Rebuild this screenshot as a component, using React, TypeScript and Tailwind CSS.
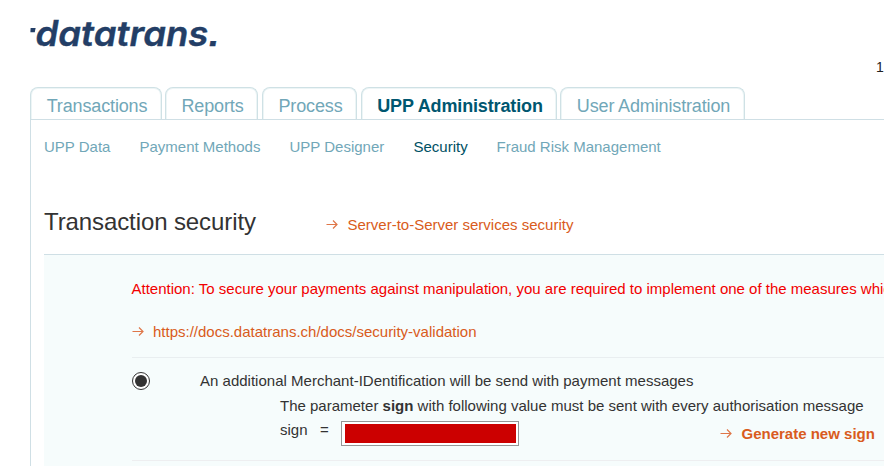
import clsx from "clsx";
import type { ReactNode } from "react";

const tabs = [
	{ label: "Transactions", box: "w-[132px] mr-[3px]" },
	{ label: "Reports", box: "w-[93px] mr-1" },
	{ label: "Process", box: "w-[95px] mr-1" },
	{ label: "UPP Administration", box: "w-[196px] mr-[3px]", active: true },
	{ label: "User Administration", box: "w-[185px]" },
];

const subTabs = [
	{ label: "UPP Data", box: "w-[95.5px]" },
	{ label: "Payment Methods", box: "w-[150px]" },
	{ label: "UPP Designer", box: "w-[124px]" },
	{ label: "Security", box: "w-[83px]", active: true },
	{ label: "Fraud Risk Management", box: "w-[180px]" },
];

function Logo() {
	return (
		<svg width="200" height="44" viewBox="0 0 200 44" className="block">
			<path d="M0.6 10h5l-.8 4.300h-4.400z" fill="#233e66" />
			<text
				x="5.500"
				y="28"
				textLength="184.500"
				lengthAdjust="spacingAndGlyphs"
				fill="#233e66"
				className="font-['Inter',sans-serif] text-[35px] font-semibold italic [font-feature-settings:'cv11','ss07']"
				stroke="#233e66"
				strokeWidth="0.4"
			>
				datatrans.
			</text>
		</svg>
	);
}

function ArrowLink({
	children,
	className,
}: {
	children: ReactNode;
	className?: string;
}) {
	return (
		<a className={clsx("flex items-center text-[#d95b20]", className)}>
			<svg
				width="12"
				height="12"
				viewBox="0 0 12 12"
				fill="none"
				stroke="#df7648"
				strokeWidth="1.2"
				className="mr-[9.500px] shrink-0"
			>
				<path d="M0.500 5.500h10.500M7 1.500l4 4-4 4" />
			</svg>
			{children}
		</a>
	);
}

export default function App() {
	return (
		<main className="h-[466px] w-[884px] overflow-hidden bg-white pl-[30px] font-['Liberation_Sans',Arial,sans-serif] text-[15px] leading-5 whitespace-nowrap text-[#333]">
			<header className="flex h-[87px] justify-between pt-[18px]">
				<Logo />
				<span className="w-2 pt-[39px] text-[14px] text-[#222]">1</span>
			</header>

			<nav className="flex h-8 text-[18px] tracking-[-0.14px]">
				{tabs.map((tab) => (
					<a
						key={tab.label}
						className={clsx(
							"flex justify-center rounded-t-[8px] border border-b-0 border-[#cfe1e5] pt-[8px] pl-[2px] shadow-[inset_0_1px_0_#edf5f6,inset_-1px_0_0_#edf5f6,inset_1px_0_0_#edf5f6]",
							tab.box,
							tab.active ? "font-bold text-[#005670]" : "text-[#71a7b8]",
						)}
					>
						{tab.label}
					</a>
				))}
			</nav>

			<section className="h-[347px] border-t border-l border-[#cfdfe5] pl-[13px]">
				<nav className="flex h-[81px] pt-[17px]">
					{subTabs.map((item) => (
						<a
							key={item.label}
							className={clsx(
								item.box,
								item.active ? "text-[#005064]" : "text-[#71a7b8]",
							)}
						>
							{item.label}
						</a>
					))}
				</nav>

				<div className="flex h-[53px]">
					<h1 className="w-[282px] pt-[5px] text-[24px] leading-8 tracking-[-0.1px] text-[#333]">
						Transaction security
					</h1>
					<ArrowLink className="mt-[14px] h-5">
						Server-to-Server services security
					</ArrowLink>
				</div>

				<div className="h-[212px] border-t border-[#cfdfe5] bg-[#f6fcfc] pl-[87.500px]">
					<div className="h-[103px] border-b border-[#e9eef0] pt-6">
						<p className="text-[#f20000]">
							Attention: To secure your payments against manipulation, you are
							required to implement one of the measures which
						</p>
						<ArrowLink className="mt-[23px]">
							https://docs.datatrans.ch/docs/security-validation
						</ArrowLink>
					</div>

					<div className="flex h-[103px] border-b border-[#eeeef0] pt-[13px]">
						<span className="mt-px ml-[0.500px] flex size-[18px] shrink-0 items-center justify-center rounded-full border border-[#333] bg-white">
							<span className="size-3 rounded-full bg-[#333]" />
						</span>
						<div className="ml-[50px] grow">
							<p className="tracking-[0.01px]">
								An additional Merchant-IDentification will be send with payment
								messages
							</p>
							<div className="pl-20">
								<p className="mt-[5px]">
									The parameter <b>sign</b> with following value must be sent
									with every authorisation message
								</p>
								<div className="mt-[4px] flex">
									<span className="w-10">sign</span>
									<span className="w-[21px]">=</span>
									<div className="mt-px h-[25px] w-[178px] border border-[#969696] bg-white py-[2px] pr-[2px] pl-[3px]">
										<div className="h-[19px] bg-[#cc0000]" />
									</div>
									<ArrowLink className="mt-[4px] ml-[201px] h-5 font-bold">
										Generate new sign
									</ArrowLink>
								</div>
							</div>
						</div>
					</div>
				</div>
			</section>
		</main>
	);
}
